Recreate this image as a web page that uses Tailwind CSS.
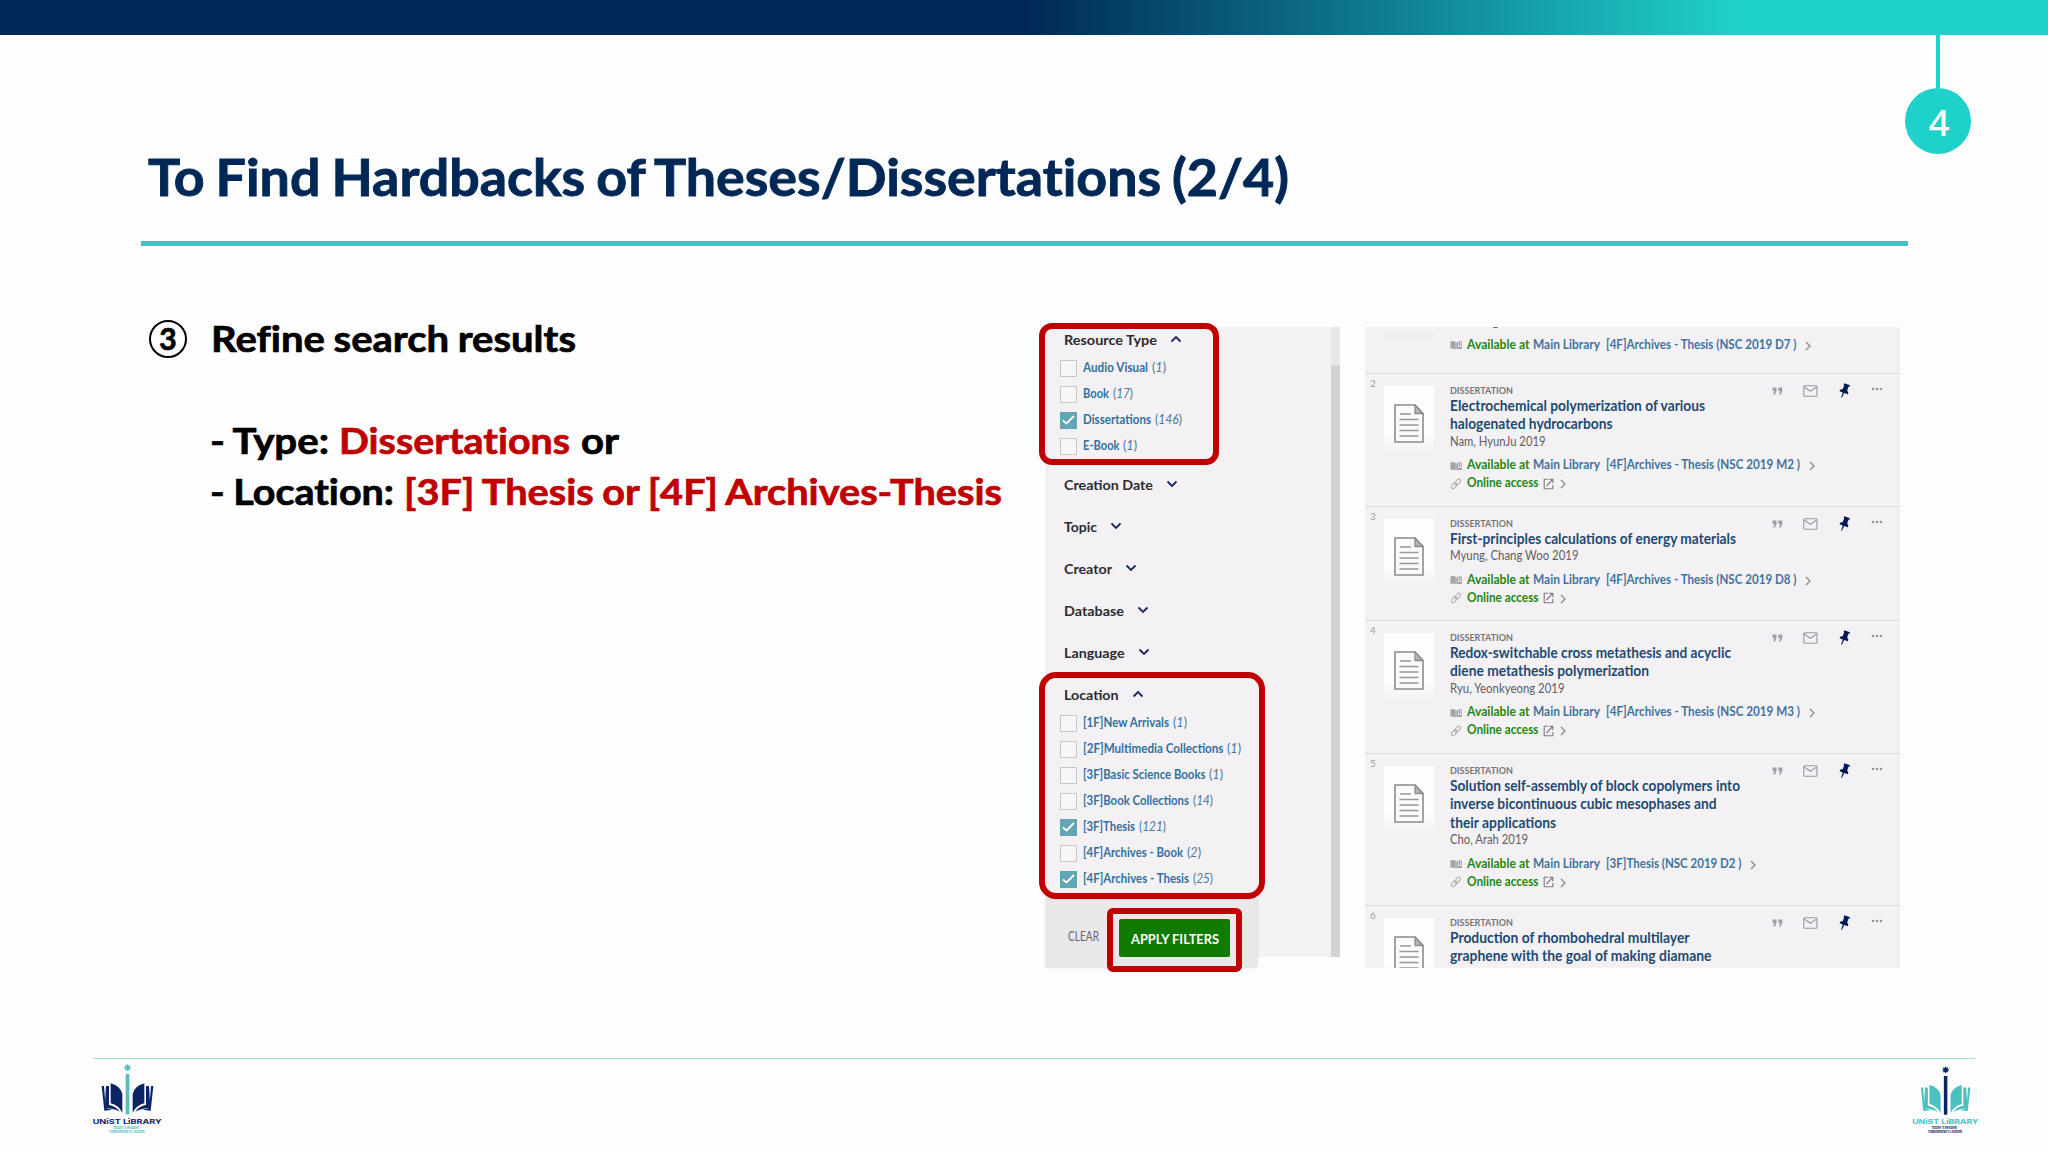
<!DOCTYPE html>
<html lang="en">
<head>
<meta charset="utf-8">
<title>To Find Hardbacks of Theses/Dissertations</title>
<script src="https://cdn.jsdelivr.net/npm/@tailwindcss/browser@4"></script>
</head>
<body class="bg-[#fdfdfd] font-['Lato',sans-serif] w-[2048px] h-[1152px] overflow-hidden">
<svg class="hidden">
  <symbol id="up" viewBox="0 0 12 8"><path d="M1.500 6.500 6 2l4.500 4.500" fill="none" stroke="currentColor" stroke-width="1.800"/></symbol>
  <symbol id="down" viewBox="0 0 12 8"><path d="M1.500 1.500 6 6l4.500-4.500" fill="none" stroke="currentColor" stroke-width="1.800"/></symbol>
  <symbol id="right" viewBox="0 0 6 10"><path d="M1 1l4 4-4 4" fill="none" stroke="currentColor" stroke-width="1.300"/></symbol>
  <symbol id="doc" viewBox="0 0 30 39"><path d="M1 1h20l8 8.500V38H1z" fill="#fbfbfb" stroke="#8c8c8f" stroke-width="1.600"/><path d="M21 1v8.500h8z" fill="#b5b5b8" stroke="#8c8c8f" stroke-width="1.300"/><path d="M6 10h11M5.500 15.500h19M5.500 21h19M5.500 26.500h19M5.500 32h19" stroke="#98989b" stroke-width="1.500"/></symbol>
  <symbol id="book" viewBox="0 0 12 10"><path d="M.5 1.500Q3.500.5 5.800 2v7.500Q3.500 8 .5 9z" fill="#a5a3a7"/><path d="M6.300 2.500 8 1.500v5.500h3.500V9H6.300z" fill="#a5a3a7"/><path d="M8.700 6V1.500l1.700-1V6z" fill="#a5a3a7"/><path d="M11.400 1.500V9" stroke="#a5a3a7" stroke-width=".8"/></symbol>
  <symbol id="link" viewBox="0 0 12 12"><g fill="none" stroke="#aaa8ac" stroke-width="1"><rect x="-3.200" y="-1.800" width="6.800" height="3.600" rx="1.800" transform="translate(4 7.800) rotate(-50)"/><rect x="-3.200" y="-1.800" width="6.800" height="3.600" rx="1.800" transform="translate(7.600 4.300) rotate(-50)"/></g></symbol>
  <symbol id="ext" viewBox="0 0 11 12"><path d="M5 1.200H1.200v9.600h8.600V7M6 1.200h3.800v4M9.600 1.500 3.500 8" fill="none" stroke="#7d7b80" stroke-width="1.100"/></symbol>
  <symbol id="quote" viewBox="0 0 11 8"><path d="M.5.500h4v3.500L3 7.500H1.200L2.300 4H.5zM6.300.500h4v3.500L8.800 7.500H7L8.100 4H6.300z" fill="#9ba1ab"/></symbol>
  <symbol id="mail" viewBox="0 0 15 12"><rect x=".8" y=".8" width="13.200" height="10.400" rx="1" fill="none" stroke="#949ba2" stroke-width="1.100"/><path d="M1.200 2l6.200 4.300L13.600 2" fill="none" stroke="#949ba2" stroke-width="1.100"/></symbol>
  <symbol id="pin" viewBox="0 0 12 15"><path d="M5.200.2 11 2.300l-.5 1.400-1-.1-1.300 4 1.200 2.200-.5 1.500-3.700-1.300L3 14.600l-1 .2 1.800-5.400L.6 8.200l.5-1.400 2.700-.9L5.200 2.200l-.5-.7z" fill="#041858"/></symbol>
</svg>

<div class="relative flex flex-col h-[1152px]">
  <header class="h-[35px] shrink-0 bg-[linear-gradient(90deg,#002856_0%,#002856_50%,#1fd1cb_85%,#1fd1cb_100%)]"></header>
  <div class="absolute top-[35px] left-[1905px] w-[66px] flex flex-col items-center">
    <div class="w-[4px] h-[53px] bg-[#1fd1cb]"></div>
    <div class="size-[66px] rounded-full bg-[#1fd1cb] text-white text-[37px] leading-[67px] text-center pl-[2px] font-['Noto_Sans'] font-medium">4</div>
  </div>

  <h1 class="ml-[141px] w-[1767px] h-[211px] pt-[110px] pl-[7px] border-b-[5.500px] border-[#48bfc0] text-[51px] leading-[64px] font-bold text-[#002856] shrink-0 [font-variant-ligatures:none] [word-spacing:-2px] [-webkit-text-stroke:0.900px_#002856]"><span class="fit" data-w="1141">To Find Hardbacks of Theses/Dissertations (2/4)</span></h1>

  <main class="flex-1 flex items-start">
    <section class="w-[1040px] shrink-0 pl-[149px] pt-[66px] text-[37px] leading-[51px] font-bold text-black [font-variant-ligatures:none] [word-spacing:-1px] [-webkit-text-stroke:0.700px]">
      <div class="flex items-center">
        <div class="size-[38px] rounded-full border-[2px] border-black text-center text-[30px] leading-[33px] mr-[24px] mt-[2px]">3</div>
        <span class="fit" data-w="365">Refine search results</span>
      </div>
      <p class="mt-[51px] ml-[61px] flex"><span class="fit" data-w="119">- Type:</span><span class="fit ml-[10px] text-[#c00000]" data-w="231">Dissertations</span><span class="fit ml-[11px]" data-w="38">or</span></p>
      <p class="ml-[61px] flex"><span class="fit" data-w="184">- Location:</span><span class="fit ml-[10px] text-[#c00000]" data-w="598">[3F] Thesis or [4F] Archives-Thesis</span></p>
    </section>

    <aside class="relative w-[324px] shrink-0 h-[645px] mt-[81px] pl-[6px]">
      <div class="flex w-[294px] h-[630px] bg-[#f3f1f4] border-l border-[#e6e4e8]">
        <div id="facets" class="flex-1 pl-[12px] text-[14px]"></div>
        <div class="w-[9px] bg-[#d4d2d5]"><div class="h-[38px] bg-[#e9e7ea]"></div></div>
      </div>
      <div class="absolute left-[6px] top-[573px] w-[211px] h-[68px] bg-[#e9e7ea] flex items-center pl-[22px] pt-[7px] shadow-[0_-1px_3px_rgba(0,0,0,0.150)]">
        <span class="fit text-[12.500px] text-[#68666b]" data-w="31">CLEAR</span>
        <button class="ml-[20px] w-[111px] h-[38px] rounded-[2px] bg-[#117a00] text-white font-bold text-[14px] leading-[39px] text-center"><span class="fit" data-w="88">APPLY FILTERS</span></button>
      </div>
      <div class="absolute -left-px -top-[4px] w-[180px] h-[142px] rounded-[13px] border-[6.500px] border-[#c00000]"></div>
      <div class="absolute -left-px top-[345px] w-[226px] h-[227px] rounded-[17px] border-[6.500px] border-[#c00000]"></div>
      <div class="absolute left-[67px] top-[581px] w-[135px] h-[64px] rounded-[6px] border-[6.500px] border-[#c00000]"></div>
    </aside>

    <section id="results" class="w-[535px] shrink-0 h-[641px] mt-[81px] ml-px bg-[#f3f1f4] overflow-hidden"></section>
  </main>

  <footer class="mx-[94px] w-[1881px] h-[94px] border-t border-[#a5dcd8]"></footer>
  <svg class="absolute left-[80px] top-[1050px]" width="100" height="95" viewBox="0 0 300 285"></svg>
</div>
<script>
const icon = (id, w, h, cls) => `<svg class="${cls || ''} shrink-0" width="${w}" height="${h}"><use href="#${id}"/></svg>`;
const fitText = (t, w, cls) => `<span class="fit ${cls || ''}" data-w="${w}">${t}</span>`;

const facets = [
  ['Resource Type', 93, [['Audio Visual', 65, '1', 14], ['Book', 26, '17', 20], ['Dissertations', 68, '146', 27, 1], ['E-Book', 36.5, '1', 14]]],
  ['Creation Date', 89], ['Topic', 33], ['Creator', 48], ['Database', 60], ['Language', 60.5],
  ['Location', 54.5, [['[1F]New Arrivals', 86, '1', 14], ['[2F]Multimedia Collections', 140.5, '1', 14], ['[3F]Basic Science Books', 122.5, '1', 14], ['[3F]Book Collections', 106, '14', 20], ['[3F]Thesis', 52, '121', 27, 1], ['[4F]Archives - Book', 100, '2', 14], ['[4F]Archives - Thesis', 106, '25', 20, 1]]],
];
document.getElementById('facets').innerHTML = facets.map(([name, w, items], i) => `
  <div class="${i ? 'h-[42px]' : 'h-[26px]'} -translate-y-px flex items-center pl-[5px] font-bold text-[#2c2b30]">${fitText(name, w)}${icon(items ? 'up' : 'down', 12, 8, 'ml-[13px] text-[#1b2560]')}</div>
  ${items ? `<div class="${i ? '-mt-[6px]' : 'mt-[2px] mb-[5px]'}">` + items.map(([t, tw, n, nw, on]) => `
    <div class="h-[26px] flex items-center text-[12.500px] text-[#33709f]">
      <span class="size-[17px] mr-[6px] ml-[0.500px] shrink-0 border flex items-center justify-center ${on ? 'bg-[#62a5b4] border-[#62a5b4]' : 'border-[#c9c7cb] bg-[#f7f6f8]'}">${on ? '<svg width="13" height="10"><path d="M1 5.500 4.500 8.500 12 1" fill="none" stroke="#fff" stroke-width="1.800"/></svg>' : ''}</span>
      ${fitText(t, tw, 'font-bold')}${fitText('(<i>' + n + '</i>)', nw, 'ml-[4px] text-[#4f7798]')}
    </div>`).join('') + '</div>' : ''}`).join('');

const avail = (place, w) => `<div class="h-[18px] flex items-center font-bold text-[12.500px]">${icon('book', 12, 10, 'mr-[4.500px]')}${fitText('Available at', 62.5, 'text-[#23870f]')}${fitText('Main Library', 67, 'ml-[3.500px] text-[#41739f]')}${fitText(place, w, 'ml-[6px] text-[#41739f]')}${icon('right', 6, 10, 'ml-[9px] text-[#8d8b90] mt-px')}</div>`;
const online = `<div class="h-[18px] flex items-center font-bold text-[12.500px] text-[#23870f]">${icon('link', 12, 12, 'mr-[4.500px]')}${fitText('Online access', 71.5)}${icon('ext', 11, 12, 'ml-[5px]')}${icon('right', 6, 10, 'ml-[6px] text-[#8d8b90] mt-px')}</div>`;
const rows = [
  [2, 'h-[133px]', [['Electrochemical polymerization of various', 255], ['halogenated hydrocarbons', 162.5]], 'Nam, HyunJu 2019', 95.5, '[4F]Archives - Thesis (NSC 2019 M2 )', 194],
  [3, 'h-[114px]', [['First-principles calculations of energy materials', 286]], 'Myung, Chang Woo 2019', 128.5, '[4F]Archives - Thesis (NSC 2019 D8 )', 190.5],
  [4, 'h-[133px]', [['Redox-switchable cross metathesis and acyclic', 281], ['diene metathesis polymerization', 199]], 'Ryu, Yeonkyeong 2019', 114.5, '[4F]Archives - Thesis (NSC 2019 M3 )', 194],
  [5, 'h-[152px]', [['Solution self-assembly of block copolymers into', 290], ['inverse bicontinuous cubic mesophases and', 266.5], ['their applications', 106]], 'Cho, Arah 2019', 78, '[3F]Thesis (NSC 2019 D2 )', 135.5],
  [6, 'h-[133px]', [['Production of rhombohedral multilayer', 239.5], ['graphene with the goal of making diamane', 261.5]], '', 0, '', 0],
];
document.getElementById('results').innerHTML = `
  <div class="h-[45.500px] pl-[85px] pt-[9px] relative">
    <div class="absolute left-[19px] top-[5px] w-[50px] h-[6px] bg-[#efedf0]"></div>
    <div class="absolute left-[128px] -top-px w-[5px] h-[2px] rounded-full bg-[#5e6d84]"></div>
    ${avail('[4F]Archives - Thesis (NSC 2019 D7 )', 190.5)}
  </div>` + rows.map(([n, h, title, author, aw, place, pw]) => `
  <article class="${h} border-t border-[#dfdde1] flex items-start shrink-0">
    <span class="w-[18.500px] shrink-0 pl-[5px] pt-[2px] text-[10px] leading-[14px] text-[#a09ea4]">${n}</span>
    <div class="w-[50px] shrink-0 h-[72px] mt-[12px] mr-[16.500px] pt-[18px] flex justify-center items-start bg-[linear-gradient(180deg,#fefefe_0%,#fdfdfd_65%,#f3f1f4_92%)]">${icon('doc', 30, 39)}</div>
    <div class="pt-[9.500px] w-[321.500px] shrink-0">
      <div class="h-[14px] leading-[15px] text-[9.500px] font-bold text-[#77757b]">${fitText('DISSERTATION', 63)}</div>
      ${title.map(([t, w]) => `<div class="h-[18.400px] leading-[17px] text-[14.500px] font-bold text-[#1e4a72]">${fitText(t, w)}</div>`).join('')}
      ${author ? `<div class="h-[15px] leading-[15px] text-[12.500px] text-[#5f5d63] mb-[8px]">${fitText(author, aw)}</div>${avail(place, pw)}${online}` : ''}
    </div>
    <div class="flex items-center pt-[8px] h-[25px]">
      ${icon('quote', 11, 8, 'mt-[1px]')}${icon('mail', 15, 12, 'ml-[20.500px] mt-[1px]')}${icon('pin', 12, 15, 'ml-[20.500px]')}
      <svg class="ml-[20.500px] -mt-[3px]" width="12" height="4"><g fill="#98969c"><circle cx="2" cy="2" r="1.300"/><circle cx="6" cy="2" r="1.300"/><circle cx="10" cy="2" r="1.300"/></g></svg>
    </div>
  </article>`).join('');

const wing = '<path d="M92 100Q122 108 127 132V188Q116 166 92 160z"/><path d="M78 108h9v57q20 3 32 20-20-11-45-11z"/><path d="M65 108h7l5 66 20 5-24 3z"/>';
const logo = (main, accent, sub) => `
  <path d="M137 72h11v121h-11z" fill="${accent}"/>
  <path d="M142.500 43v20M132.500 53h20M135.500 46l14 14M149.500 46l-14 14" stroke="${accent}" stroke-width="4"/><circle cx="142.500" cy="53" r="6" fill="${accent}"/>
  <g fill="${main}">${wing}</g>
  <g fill="${main}" transform="matrix(-1 0 0 1 285 0)">${wing}</g>
  <text x="38" y="221" textLength="207" lengthAdjust="spacingAndGlyphs" font-family="Inter" font-weight="700" font-size="19" fill="${main}">UNiST LiBRARY</text>
  <text x="98" y="238" textLength="82" lengthAdjust="spacingAndGlyphs" font-family="Inter" font-weight="700" font-size="9.500" fill="${sub}">TODAY'S READER,</text>
  <text x="87" y="250" textLength="107" lengthAdjust="spacingAndGlyphs" font-family="Inter" font-weight="700" font-size="9.500" fill="${sub}">TOMORROW'S LEADER</text>`;
const page = document.querySelector('footer').parentElement;
page.querySelector(':scope > svg').innerHTML = logo('#0b2463', '#55bfbd', '#55bfbd');
page.insertAdjacentHTML('beforeend', `<svg class="absolute left-[1900px] top-[1053px]" width="96" height="91" viewBox="0 0 300 285">${logo('#4bc0be', '#0b2463', '#0b2463')}</svg>`);

// Squeeze each label to its column width, again whenever its natural width changes.
const squeeze = inner => {
  inner.style.transform = 'none';
  const natural = inner.getBoundingClientRect().width;
  if (natural) inner.style.transform = `scaleX(${inner.parentElement.dataset.w / natural})`;
};
const watcher = new ResizeObserver(entries => entries.forEach(e => squeeze(e.target)));
document.querySelectorAll('.fit').forEach(el => {
  const inner = document.createElement('span');
  inner.className = 'inline-block whitespace-pre origin-left';
  while (el.firstChild) inner.append(el.firstChild);
  el.classList.add('inline-block', 'whitespace-nowrap', 'shrink-0', 'text-left');
  el.append(inner);
  el.style.width = el.dataset.w + 'px';
  squeeze(inner);
  watcher.observe(inner);
});
addEventListener('load', () => document.querySelectorAll('.fit > span').forEach(squeeze));
</script>
</body>
</html>
